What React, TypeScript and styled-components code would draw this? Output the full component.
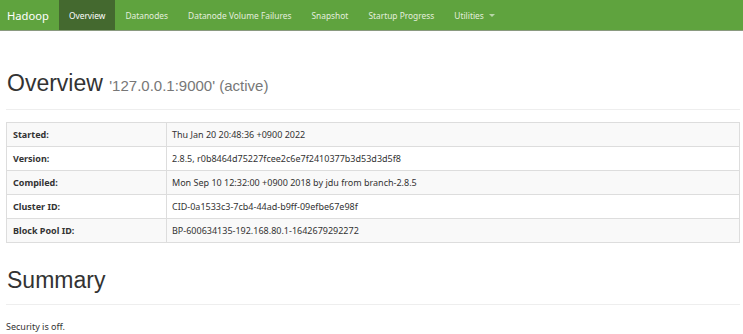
import React from "react";
import styled, { createGlobalStyle } from "styled-components";

const Global = createGlobalStyle`
  html, body { margin: 0; padding: 0; background: #fff; }
  body {
    font-family: "Noto Sans", "Open Sans", "Liberation Sans", sans-serif;
    font-size: 9px;
    line-height: 13px;
    color: #333;
  }
  * { box-sizing: border-box; }
`;

const Navbar = styled.nav`
  display: flex;
  align-items: stretch;
  height: 31px;
  background: #5fa33e;
  border-bottom: 1px solid #8a9a80;
`;

const Brand = styled.a`
  display: flex;
  align-items: center;
  padding: 0 10px 0 7px;
  font-size: 11.2px;
  color: #fff;
  text-decoration: none;
`;

const NavList = styled.ul`
  display: flex;
  list-style: none;
  margin: 0;
  padding: 0;
`;

const NavItem = styled.li<{ $active?: boolean }>`
  display: flex;
  align-items: center;
  gap: 5px;
  padding: 0 10px;
  font-size: 8.4px;
  color: ${(p) => (p.$active ? "#fff" : "#e3eedd")};
  background: ${(p) => (p.$active ? "#44692f" : "transparent")};
`;

const Caret = styled.span`
  display: inline-block;
  width: 0;
  height: 0;
  border-left: 3px solid transparent;
  border-right: 3px solid transparent;
  border-top: 3px solid #b9d6a9;
  margin-top: 1px;
`;

const Container = styled.main`
  padding: 0 3px 0 6px;
`;

const PageHeader = styled.div<{ $top: number }>`
  margin-top: ${(p) => p.$top}px;
  padding-bottom: 11px;
  border-bottom: 1px solid #eee;
`;

const H1 = styled.h1`
  margin: 0 0 0 1px;
  font-family: "Liberation Sans", Arial, sans-serif;
  font-weight: 400;
  font-size: 23px;
  line-height: 25px;
  color: #333;
`;

const Small = styled.small`
  font-size: 15px;
  color: #777;
`;

const Table = styled.table`
  width: 100%;
  margin-top: 12px;
  border-collapse: collapse;
  border: 1px solid #ddd;
`;

const Row = styled.tr<{ $striped: boolean }>`
  background: ${(p) => (p.$striped ? "#f9f9f9" : "#fff")};
`;

const Th = styled.th`
  width: 160px;
  text-align: left;
  font-weight: 700;
  padding: 5px 5px 5px 6px;
  border: 1px solid #ddd;
`;

const Td = styled.td`
  padding: 5px;
  border: 1px solid #ddd;
`;

const Para = styled.p`
  margin: 15px 0 0 0;
`;

const rows: [string, string][] = [
  ["Started:", "Thu Jan 20 20:48:36 +0900 2022"],
  ["Version:", "2.8.5, r0b8464d75227fcee2c6e7f2410377b3d53d3d5f8"],
  ["Compiled:", "Mon Sep 10 12:32:00 +0900 2018 by jdu from branch-2.8.5"],
  ["Cluster ID:", "CID-0a1533c3-7cb4-44ad-b9ff-09efbe67e98f"],
  ["Block Pool ID:", "BP-600634135-192.168.80.1-1642679292272"],
];

const navItems = [
  "Overview",
  "Datanodes",
  "Datanode Volume Failures",
  "Snapshot",
  "Startup Progress",
];

export default function App() {
  return (
    <>
      <Global />
      <Navbar>
        <Brand href="#">Hadoop</Brand>
        <NavList>
          {navItems.map((n, i) => (
            <NavItem key={n} $active={i === 0}>
              {n}
            </NavItem>
          ))}
          <NavItem>
            Utilities <Caret />
          </NavItem>
        </NavList>
      </Navbar>
      <Container>
        <PageHeader $top={40}>
          <H1>
            Overview <Small>'127.0.0.1:9000' (active)</Small>
          </H1>
        </PageHeader>
        <Table>
          <tbody>
            {rows.map(([k, v], i) => (
              <Row key={k} $striped={i % 2 === 0}>
                <Th>{k}</Th>
                <Td>{v}</Td>
              </Row>
            ))}
          </tbody>
        </Table>
        <PageHeader $top={25}>
          <H1>Summary</H1>
        </PageHeader>
        <Para>Security is off.</Para>
      </Container>
    </>
  );
}
